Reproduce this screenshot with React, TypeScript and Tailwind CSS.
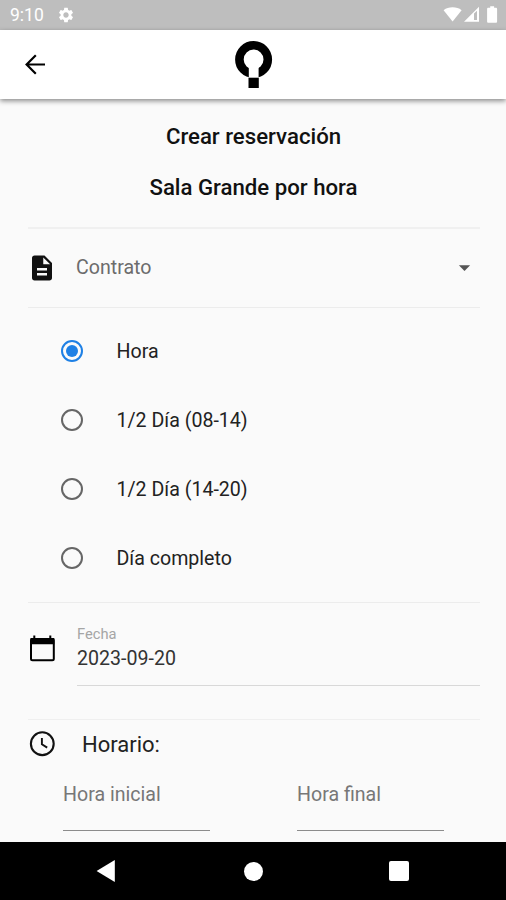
import { useState } from 'react';
import { MdArrowDropDown, MdDescription, MdSettings } from 'react-icons/md';

const DURATIONS = ['Hora', '1/2 Día (08-14)', '1/2 Día (14-20)', 'Día completo'];

function StatusBar() {
  return (
    <div className="flex h-[30px] flex-none items-center bg-[#bebebe] text-white">
      <span className="ml-[10px] w-[47px] pt-[2px] text-[17.5px] leading-none">9:10</span>
      <MdSettings className="h-[18px] w-[18px]" />
      <svg className="ml-auto mr-[6px] h-[18px] w-[58px]" viewBox="0 0 58 18" fill="currentColor">
        <path d="M1.6 4.2C4.2 2 7.1 1.2 10.6 1.2s6.5.8 9 3L10.6 15.6z" />
        <path fillRule="evenodd" d="M22 15.8 37 .8v15zM32 7.5v6.6h3V4.7z" />
        <path d="M46.4 1.8h1.8V.3h3.9v1.5h1.7c.8 0 1.3.5 1.3 1.3v12.3c0 .8-.5 1.3-1.3 1.3h-7.4c-.8 0-1.3-.5-1.3-1.3V3.1c0-.8.5-1.3 1.3-1.3z" />
      </svg>
    </div>
  );
}

function Header() {
  return (
    <header className="z-10 grid h-[69px] flex-none grid-cols-3 items-center bg-white shadow-[0_2px_5px_rgba(0,0,0,0.45)]">
      <button type="button" aria-label="Atrás" className="ml-5 w-fit">
        <svg className="h-[30px] w-[30px]" viewBox="0 0 30 30" fill="none" stroke="#000" strokeWidth="2.2">
          <path d="M25 14.5H7M15.8 5.3 6.6 14.5l9.2 9.2" />
        </svg>
      </button>
      <svg className="h-[50px] w-[40px] justify-self-center" viewBox="0 0 40 50">
        <circle cx="20.6" cy="19.5" r="14.2" fill="none" stroke="#000" strokeWidth="8.6" />
        <path d="M15.8 27h9.800v11.5h-9.800z" fill="#fff" />
        <path d="M15.5 37.7h10.300V48H15.5z" fill="#000" />
      </svg>
    </header>
  );
}

function CalendarIcon() {
  return (
    <svg className="mt-[31px] -ml-px h-[30px] w-[30px] flex-none" viewBox="0 0 30 30">
      <rect x="4" y="5" width="22.8" height="21.3" rx="1.5" fill="none" stroke="#000" strokeWidth="2" />
      <path d="M3.5 4h23.8v6.300H3.5zM6.300 1.500h2V5h-2zM22.300 1.500h2V5h-2z" fill="#000" />
    </svg>
  );
}

function ClockIcon() {
  return (
    <svg className="-ml-px h-[30px] w-[30px] flex-none" viewBox="0 0 30 30" fill="none" stroke="#111" strokeWidth="2.1">
      <circle cx="15.3" cy="13.7" r="11.4" />
      <path d="M14.9 7.900v6.400l5.300 3.300" strokeWidth="1.9" />
    </svg>
  );
}

function Radio({ label, checked, onSelect }: { label: string; checked: boolean; onSelect: () => void }) {
  return (
    <label className="flex h-[69px] items-center pl-[33px]">
      <input type="radio" name="duration" className="sr-only" checked={checked} onChange={onSelect} />
      <span
        className={`mb-px flex h-[22px] w-[22px] items-center justify-center rounded-full border-2 ${
          checked ? 'border-[#1e80e5]' : 'border-[#666]'
        }`}
      >
        {checked && <span className="h-3 w-3 rounded-full bg-[#1e80e5]" />}
      </span>
      <span className="ml-[33.5px] text-[19.6px] text-[#222]">{label}</span>
    </label>
  );
}

function TimeField({ label }: { label: string }) {
  return (
    <div className="h-[55px] w-[147px] border-b border-[#8c8c8c] pt-[7px] text-[19.6px] leading-[24px] text-[#777]">
      {label}
    </div>
  );
}

function NavigationBar() {
  return (
    <nav className="flex h-[58px] flex-none items-center justify-between bg-black pl-[96px] pr-[97px]">
      <svg className="h-[22px] w-[20px]" viewBox="0 0 20 22" fill="#fff">
        <path d="M18.800 0v22L.6 11z" />
      </svg>
      <span className="ml-[2px] h-[19px] w-[19px] rounded-full bg-white" />
      <span className="h-[20px] w-[20px] rounded-[2px] bg-white" />
    </nav>
  );
}

export default function App() {
  const [duration, setDuration] = useState(DURATIONS[0]);

  return (
    <div className="flex h-[900px] w-[506px] flex-col overflow-hidden bg-[#fafafa] font-[Roboto,sans-serif]">
      <StatusBar />
      <Header />

      <main className="flex flex-1 flex-col pl-[28px] pr-[26px]">
        <div className="flex h-[130px] flex-col items-center border-b-2 border-[#f0f0f0] pr-px pt-[25px] text-[22.2px] font-medium leading-[25px] text-[#111]">
          <h1>Crear reservación</h1>
          <h2 className="mt-[26px]">Sala Grande por hora</h2>
        </div>

        <div className="flex h-[79px] items-center border-b border-[#ececec] text-[#6c6c6c]">
          <MdDescription className="-ml-px mb-px h-[30px] w-[30px] text-[#111]" />
          <span className="ml-[19px] text-[19.6px]">Contrato</span>
          <MdArrowDropDown className="mb-[2px] ml-auto mr-[2px] h-[27px] w-[27px] text-[#555]" />
        </div>

        <div className="flex h-[295px] flex-col border-b border-[#ececec] pt-[9px]">
          {DURATIONS.map((item) => (
            <Radio key={item} label={item} checked={item === duration} onSelect={() => setDuration(item)} />
          ))}
        </div>

        <div className="flex h-[117px] items-start border-b border-[#efefef]">
          <CalendarIcon />
          <div className="ml-[20px] h-[83px] flex-1 border-b border-[#d8d8d8] pt-[22px]">
            <div className="text-[14.7px] leading-[18px] text-[#a5a5a5]">Fecha</div>
            <div className="mt-[4px] text-[19.6px] leading-[24px] text-[#333]">2023-09-20</div>
          </div>
        </div>

        <div className="flex h-[49px] flex-none items-center text-black">
          <ClockIcon />
          <span className="ml-[25px] text-[22px] text-[#222]">Horario:</span>
        </div>

        <div className="mt-[7px] flex gap-[87px] pl-[35px]">
          <TimeField label="Hora inicial" />
          <TimeField label="Hora final" />
        </div>
      </main>

      <NavigationBar />
    </div>
  );
}
